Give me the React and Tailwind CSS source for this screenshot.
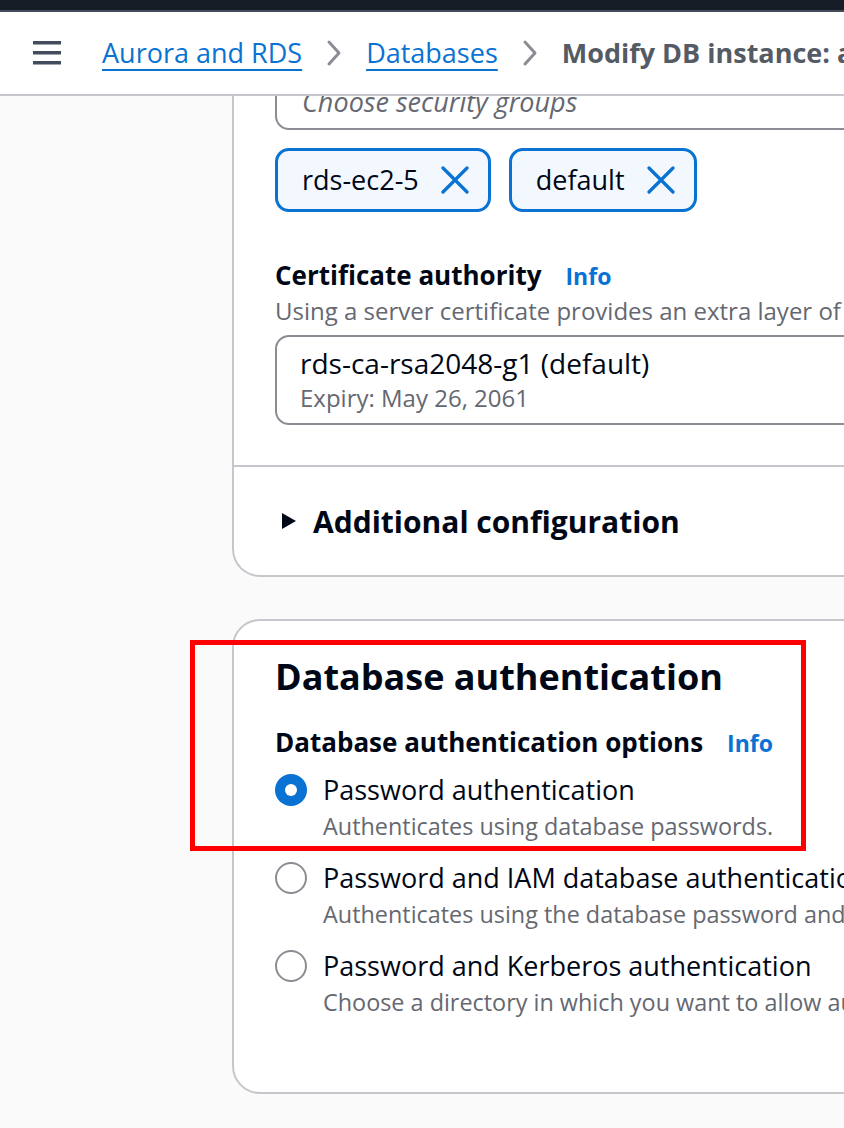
const font = { fontFamily: '"Open Sans", "Noto Sans", sans-serif' };

function Chevron() {
  return (
    <svg width="16" height="28" viewBox="0 0 16 28" className="mx-[24px] shrink-0" aria-hidden="true">
      <path d="M3 3 L13 14 L3 25" fill="none" stroke="#8c8c94" strokeWidth="3" strokeLinecap="round" strokeLinejoin="round" />
    </svg>
  );
}

function DismissIcon() {
  return (
    <svg width="28" height="28" viewBox="0 0 28 28" className="shrink-0" aria-hidden="true">
      <path d="M2 2 L26 26 M26 2 L2 26" fill="none" stroke="#0972d3" strokeWidth="3.2" strokeLinecap="round" />
    </svg>
  );
}

function Token({ label }) {
  return (
    <div className="flex h-[64px] items-center gap-[22px] rounded-[14px] border-[3px] border-[#0972d3] bg-[#f2f8fd] pl-[24px] pr-[19px] text-[27px] text-[#000716]">
      <span>{label}</span>
      <DismissIcon />
    </div>
  );
}

function Radio({ checked }) {
  if (checked) {
    return (
      <span className="flex h-[32px] w-[32px] shrink-0 items-center justify-center rounded-full bg-[#0972d3]">
        <span className="h-[12px] w-[12px] rounded-full bg-white" />
      </span>
    );
  }
  return <span className="block h-[32px] w-[32px] shrink-0 rounded-full border-2 border-[#8c8c94] bg-white" />;
}

function Option({ checked, label, desc }) {
  return (
    <div className="flex gap-[16px]">
      <div className="shrink-0 pt-[2px]">
        <Radio checked={checked} />
      </div>
      <div className="whitespace-nowrap">
        <div className="text-[27px] leading-[36px] text-[#000716]">{label}</div>
        <div className="text-[23.4px] leading-[36px] text-[#656871]">{desc}</div>
      </div>
    </div>
  );
}

export default function App() {
  return (
    <div className="relative h-[1128px] w-[844px] overflow-hidden bg-[#fafafa]" style={font}>
      <div className="h-[10px] bg-[#161d26]" />
      <div className="h-[2px] bg-[#414d5c]" />
      <header className="flex h-[84px] items-center border-b-2 border-[#c6c6cd] bg-white pl-[33px] whitespace-nowrap">
        <svg width="28" height="24" viewBox="0 0 28 24" className="shrink-0" aria-hidden="true">
          <g fill="#414d5c">
            <rect x="0" y="0" width="28" height="3.5" />
            <rect x="0" y="10" width="28" height="3.5" />
            <rect x="0" y="20" width="28" height="3.5" />
          </g>
        </svg>
        <nav className="ml-[41px] flex shrink-0 items-center text-[27px]">
          <a className="text-[#0972d3] underline decoration-2 underline-offset-[6px]">Aurora and RDS</a>
          <Chevron />
          <a className="text-[#0972d3] underline decoration-2 underline-offset-[6px]">Databases</a>
          <Chevron />
          <span className="font-bold text-[#545b64]">Modify DB instance: auth-db</span>
        </nav>
      </header>

      <main className="h-[1030px] overflow-hidden">
        <div className="-mt-[22px] pl-[232px]">
          <section className="w-[800px] rounded-b-[28px] border-2 border-t-0 border-[#c6c6cd] bg-white">
            <div className="pl-[41px] pb-[40px]">
              <div className="flex h-[56px] items-center rounded-[14px] border-2 border-[#8c8c94] bg-white pl-[25px] text-[27px] italic text-[#656871]">
                Choose security groups
              </div>
              <div className="mt-[18px] flex gap-[18px]">
                <Token label="rds-ec2-5" />
                <Token label="default" />
              </div>
              <div className="mt-[44px] flex items-baseline gap-[24px] whitespace-nowrap">
                <span className="text-[26px] font-bold text-[#000716]">Certificate authority</span>
                <span className="text-[23px] font-bold text-[#0972d3]">Info</span>
              </div>
              <p className="whitespace-nowrap text-[24px] leading-[32px] text-[#656871]">
                Using a server certificate provides an extra layer of security by validating the connection.
              </p>
              <div className="mt-[8px] flex h-[90px] flex-col justify-center rounded-[14px] border-2 border-[#8c8c94] pl-[23px]">
                <span className="text-[28px] leading-[36px] text-[#000716]">rds-ca-rsa2048-g1 (default)</span>
                <span className="text-[24px] leading-[34px] text-[#656871]">Expiry: May 26, 2061</span>
              </div>
            </div>
            <div className="flex h-[110px] items-center gap-[16px] border-t-2 border-[#c6c6cd] pl-[47px]">
              <svg width="16" height="18" viewBox="0 0 16 18" className="shrink-0" aria-hidden="true">
                <path d="M1 1 L15 9 L1 17 Z" fill="#000716" />
              </svg>
              <span className="text-[30px] font-bold text-[#000716]">Additional configuration</span>
            </div>
          </section>

          <section className="mt-[42px] w-[800px] rounded-[28px] border-2 border-[#c6c6cd] bg-white pl-[41px] pt-[32px] pb-[72px]">
            <h2 className="text-[36px] font-bold leading-[48px] text-[#000716]">Database authentication</h2>
            <div className="mt-[22px] flex items-baseline gap-[24px] whitespace-nowrap">
              <span className="text-[26px] font-bold text-[#000716]">Database authentication options</span>
              <span className="text-[23px] font-bold text-[#0972d3]">Info</span>
            </div>
            <div className="mt-[10px] flex flex-col gap-[16px]">
              <Option checked label="Password authentication" desc="Authenticates using database passwords." />
              <Option
                label="Password and IAM database authentication"
                desc="Authenticates using the database password and user credentials through AWS IAM users and roles."
              />
              <Option
                label="Password and Kerberos authentication"
                desc="Choose a directory in which you want to allow authorized users to authenticate with this DB instance using Kerberos Authentication."
              />
            </div>
          </section>
        </div>
      </main>

      <div className="absolute left-[190px] top-[640px] h-[211px] w-[616px] border-[5px] border-[#ff0000]" />
    </div>
  );
}
